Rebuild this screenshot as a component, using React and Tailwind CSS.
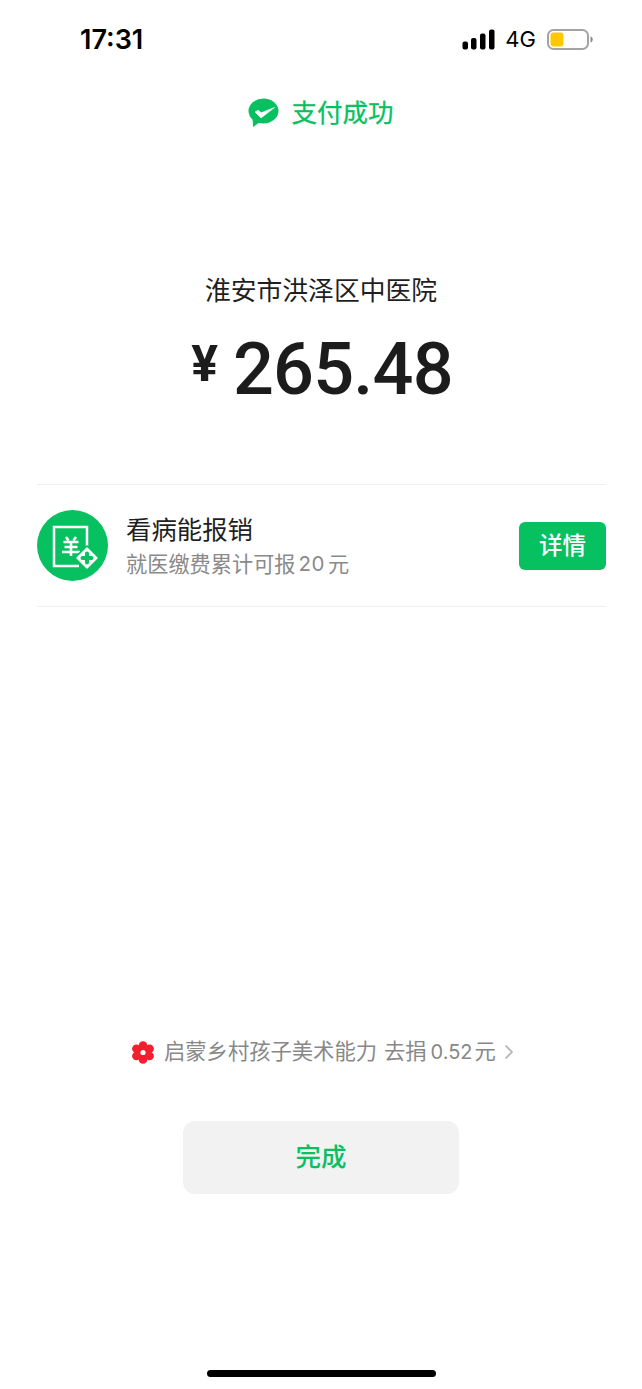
const CJK = "font-['Inter','Noto_Sans_CJK_SC',sans-serif]";

function Signal() {
  return (
    <svg width="33" height="21" viewBox="0 0 33 21" className="block">
      <rect x="0.5" y="12.5" width="5.5" height="8" rx="2" fill="#000" />
      <rect x="9" y="9" width="5.5" height="11.5" rx="2" fill="#000" />
      <rect x="18" y="4.5" width="5.5" height="16" rx="2" fill="#000" />
      <rect x="27" y="0.5" width="5.5" height="20" rx="2" fill="#000" />
    </svg>
  );
}

function Battery() {
  return (
    <svg width="46" height="21" viewBox="0 0 46 21" className="block">
      <rect x="1" y="1" width="40" height="19" rx="5.5" fill="#fff" stroke="#a3a3a3" strokeWidth="2" />
      <rect x="3.5" y="3.5" width="13" height="14" rx="3" fill="#ffc800" />
      <path d="M43.5 7.5c1.5.4 2.2 1.6 2.2 3s-.7 2.6-2.2 3z" fill="#8a8a8a" />
    </svg>
  );
}

function PayLogo() {
  return (
    <svg width="31" height="30" viewBox="0 0 31 30" className="block">
      <ellipse cx="15.500" cy="13" rx="15" ry="12.500" fill="#07c160" />
      <path d="M4.500 20l0.600 9 7-5z" fill="#07c160" />
      <path d="M7 14l3.200-1.800 3 2.600L26.500 9.500 13 20z" fill="#fff" stroke="#fff" strokeWidth="0.600" strokeLinejoin="round" />
    </svg>
  );
}

function ClaimIcon() {
  return (
    <svg width="71" height="71" viewBox="0 0 71 71" className="block shrink-0">
      <circle cx="35.500" cy="35.500" r="35.500" fill="#07c160" />
      <path d="M50 38V17H17v39h25" fill="none" stroke="#fff" strokeWidth="2.500" />
      <path d="M29 27l2.500 3.500M39 27l-2.500 3.500M26.500 32h15M27.500 37h13M25 42h18M34 31v15" fill="none" stroke="#fff" strokeWidth="2.600" />
      <path d="M50 38l10 10-10 10-10-10z" fill="#fff" stroke="#07c160" strokeWidth="5" paintOrder="stroke" strokeLinejoin="round" />
      <path d="M50 38l10 10-10 10-10-10z" fill="#fff" stroke="#fff" strokeWidth="1.500" strokeLinejoin="round" />
      <path d="M50 43.500v9M45.500 48h9" fill="none" stroke="#07c160" strokeWidth="4" strokeLinecap="round" />
    </svg>
  );
}

function Flower() {
  return (
    <svg width="24" height="23" viewBox="0 0 24 23" className="block shrink-0">
      <g fill="#f2202f">
        <circle cx="12" cy="4.500" r="4.300" />
        <circle cx="18.600" cy="7.800" r="4.300" />
        <circle cx="18.600" cy="15" r="4.300" />
        <circle cx="12" cy="18.500" r="4.300" />
        <circle cx="5.400" cy="15" r="4.300" />
        <circle cx="5.400" cy="7.800" r="4.300" />
        <circle cx="12" cy="11.500" r="6" />
      </g>
      <circle cx="12" cy="11.500" r="2.600" fill="#fff" />
    </svg>
  );
}

export default function App() {
  return (
    <div className={`w-[642px] h-[1389px] bg-white flex flex-col ${CJK}`}>
      <div className="h-[78px] shrink-0 flex items-center justify-between pl-[80px] pr-[49px]">
        <span className="text-[27px] font-semibold text-black leading-none">17:31</span>
        <div className="flex items-center">
          <Signal />
          <span className="ml-[10px] mr-[11px] text-[22px] font-normal text-black leading-none">4G</span>
          <Battery />
        </div>
      </div>

      <div className="mt-[20px] h-[30px] flex items-center justify-center gap-[12px]">
        <PayLogo />
        <span className="text-[25.500px] font-normal text-[#07c160] leading-none [-webkit-text-stroke:0.3px_#07c160]">支付成功</span>
      </div>

      <div className="mt-[148px] h-[30px] flex items-center justify-center text-[25.800px] text-[#1f1f1f] leading-none">
        淮安市洪泽区中医院
      </div>

      <div className="mt-[24px] h-[80px] flex items-center justify-center gap-[15px] font-['Roboto','sans-serif'] text-[#1c1c1c]">
        <span className="text-[50px] font-bold leading-none -mt-[12px] ml-[2px]">¥</span>
        <span className="text-[72px] font-medium leading-none tracking-[-0.800px]">265.48</span>
      </div>

      <div className="mt-[74px] ml-[37px] mr-[36px] h-[123px] border-y border-[#f0f0f0] flex items-center">
        <ClaimIcon />
        <div className="ml-[18px] flex-1 flex flex-col">
          <span className="text-[25.400px] text-[#1f1f1f] leading-[30px]">看病能报销</span>
          <span className="mt-[6px] flex items-center text-[21.200px] text-[#8a8a8a] leading-[26px] whitespace-nowrap">
            就医缴费累计可报
            <span className="ml-[3px] text-[20.500px] tracking-[0.5px]">20</span>
            <span className="ml-[3px]">元</span>
          </span>
        </div>
        <div className="w-[87px] h-[48px] rounded-[6px] bg-[#07c160] text-white text-[23.500px] font-medium flex items-center justify-center">
          详情
        </div>
      </div>

      <div className="flex-1" />

      <div className="h-[30px] flex items-center pl-[131px] text-[#888888] leading-none whitespace-nowrap">
        <Flower />
        <span className="ml-[9px] text-[21.300px]">启蒙乡村孩子美术能力</span>
        <span className="ml-[7px] text-[21.300px]">去捐</span>
        <span className="ml-[4px] text-[20px]">0.52</span>
        <span className="ml-[2px] text-[21.300px]">元</span>
        <svg width="10" height="16" viewBox="0 0 10 16" className="ml-[8px] block">
          <path d="M1.500 1.500L8 8l-6.500 6.500" fill="none" stroke="#b2b2b2" strokeWidth="1.600" />
        </svg>
      </div>

      <div className="mt-[54px] flex justify-center">
        <div className="w-[276px] h-[73px] rounded-[12px] bg-[#f2f2f2] text-[#07c160] text-[25.500px] font-medium flex items-center justify-center">
          完成
        </div>
      </div>

      <div className="mt-[176px] mb-[12px] flex justify-center">
        <div className="w-[229px] h-[7px] rounded-full bg-black" />
      </div>
    </div>
  );
}
